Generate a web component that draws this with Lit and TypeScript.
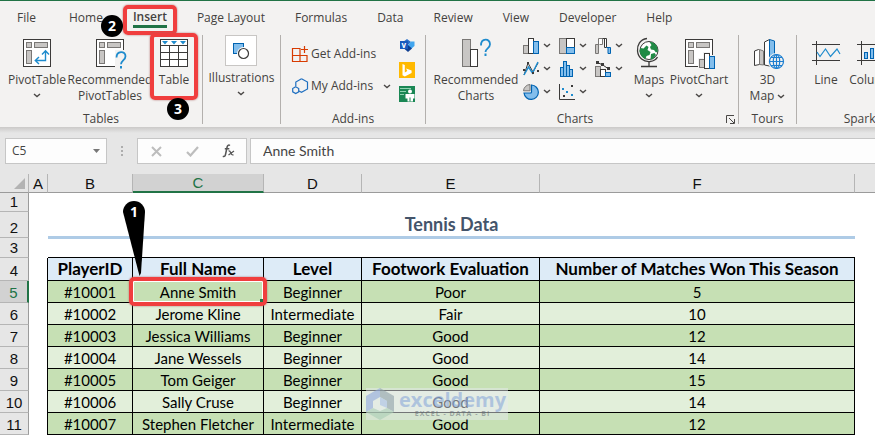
import { LitElement, html, css, svg, nothing } from "lit";
import { customElement, property } from "lit/decorators.js";
import { classMap } from "lit/directives/class-map.js";

const TABS = ["File", "Home", "Insert", "Page Layout", "Formulas", "Data", "Review", "View", "Developer", "Help"];

const PLAYERS: [string, string, string, string, number][] = [
  ["#10001", "Anne Smith", "Beginner", "Poor", 5],
  ["#10002", "Jerome Kline", "Intermediate", "Fair", 10],
  ["#10003", "Jessica Williams", "Beginner", "Good", 12],
  ["#10004", "Jane Wessels", "Beginner", "Good", 14],
  ["#10005", "Tom Geiger", "Beginner", "Good", 15],
  ["#10006", "Sally Cruse", "Beginner", "Good", 14],
  ["#10007", "Stephen Fletcher", "Intermediate", "Good", 12],
];

const pivotFrame = svg`
  <rect x="0.5" y="0.5" width="27" height="27" fill="#fff" stroke="#3b3a39"/>
  <g fill="#c8c6c4" stroke="#797775">
    <rect x="3.5" y="3.5" width="5" height="5"/><rect x="11.5" y="3.5" width="13" height="5"/><rect x="3.5" y="11.5" width="5" height="13"/>
  </g>`;

const LARGE: Record<string, unknown> = {
  pivot: svg`${pivotFrame}
    <g fill="none" stroke="#1e8bcd" stroke-width="1.4"><path d="M22.5 12v9.5H13M19 15.5l3.5-3.7 3.5 3.7M16 18l-3.7 3.5L16 25"/></g>`,
  recommendedPivot: svg`${pivotFrame}
    <path d="M19 11h10v18h-10z" fill="#f3f2f1"/>
    <path d="M20.5 18.5c0-7 9-7 9-1.300 0 4-4.500 4.300-4.500 8" fill="none" stroke="#1e8bcd" stroke-width="1.800"/>
    <rect x="24" y="27" width="2" height="2.500" fill="#1e8bcd"/>`,
  table: svg`<rect x="0.5" y="0.5" width="27" height="27" fill="#fff" stroke="#3b3a39"/>
    <path d="M0 6.500h28M0 13.500h28M0 20.500h28M9.500 6v22M18.500 6v22" stroke="#3b3a39" fill="none"/>
    <path d="M2 2h6l-3 3.500zM11 2h6l-3 3.500zM20 2h6l-3 3.500z" fill="#1e8bcd"/>`,
  recommendedChart: svg`<rect x="0.5" y="0.5" width="8" height="27" fill="#c8c6c4" stroke="#797775"/>
    <rect x="8.500" y="10.500" width="7" height="17" fill="#fff" stroke="#3b3a39"/>
    <path d="M19 6.500c0-7.500 9-7.500 9-1.200 0 4-4.500 4-4.500 7.700" fill="none" stroke="#1e8bcd" stroke-width="1.800"/>
    <rect x="22.500" y="14.500" width="2" height="2.500" fill="#1e8bcd"/>`,
  maps: svg`<circle cx="14" cy="11.500" r="9" fill="#fff" stroke="#3b3a39"/>
    <path d="M14.500 3c3-.5 6 1.500 7.500 4.500l1 5-2 1-2-2.500-3-.5-1-2.500 1.500-2zM5.500 9l3 .5 3-3 2 1.500-1 3 3 2-1 3-3 1-1 3c-3-1-5.500-4.500-6-8zM16 15l3.500-1 1.500 2-3 4-2.500.5z" fill="#1f8a45"/>
    <path d="M12-.5C5 .5 2 6 2.500 12c.7 7 6 11 12.500 10.500 4-.4 6.500-2.500 7.500-4.500" fill="none" stroke="#3b3a39" stroke-width="1.300"/>
    <path d="M14 22.500v4.500M6 27.500h16" stroke="#3b3a39" stroke-width="1.300"/>`,
  pivotChart: svg`${pivotFrame}
    <path d="M13 19h5v-6h7v3h6v14H13z" fill="#f3f2f1"/>
    <rect x="14.500" y="20.500" width="5" height="8" fill="#c8c6c4" stroke="#797775"/>
    <rect x="19.500" y="14.500" width="5" height="15" fill="#fff" stroke="#3b3a39"/>
    <rect x="24.500" y="17.500" width="5" height="12" fill="#83beec" stroke="#0063b1"/>`,
  map3d: svg`<path d="M.5 12l4-1.500 1 .5v14.500l-5 1z" fill="#fff" stroke="#3b3a39"/>
    <path d="M5.500 10.500l4 1.500v14l-4-.5z" fill="#c8c6c4" stroke="#797775"/>
    <path d="M10.500 3l5-2.500V27l-5-1z" fill="#fff" stroke="#3b3a39"/>
    <path d="M15.500 .5l5 1.500v24l-5 1z" fill="#83beec" stroke="#0063b1"/>
    <circle cx="22.500" cy="22.500" r="8.500" fill="#f3f2f1"/>
    <g fill="none" stroke="#1e7fd0" stroke-width="1.200"><circle cx="22.500" cy="22.500" r="7"/><ellipse cx="22.500" cy="22.500" rx="3.200" ry="7"/><path d="M22.500 15.500v14M15.500 22.500h14M17 18.500h11M17 26.500h11"/></g>`,
  line: svg`<path d="M0 5.500h28M0 21.500h28M4.500 2v24" stroke="#3b3a39" fill="none"/>
    <path d="M5 13l3 4.500 5.500-7.500 5 7.500L25 10l3 5" fill="none" stroke="#1e8bcd" stroke-width="1.200"/>`,
  column: svg`<path d="M0 5.500h28M0 21.500h28M4.500 2v24" stroke="#3b3a39" fill="none"/>
    <g fill="#83beec" stroke="#0063b1"><rect x="7.500" y="13.500" width="3" height="6"/><rect x="13.500" y="9.500" width="3" height="10"/><rect x="19.500" y="11.500" width="3" height="8"/></g>`,
};

const SMALL: Record<string, unknown> = {
  getAddins: svg`<path d="M.5 2.500H8v13H.5zM.5 9.500h14.500v6H.5M8 9.500V2.500M12.500 0v7M9 3.500h7" fill="none" stroke="#d83b01" stroke-width="1.200"/>`,
  myAddins: svg`<path d="M9.500.7l6 3.300v7l-6 3.300-2.500-1.300M3.800 8V4L9.500.7" fill="none" stroke="#1e6fc0" stroke-width="1.200"/>
    <path d="M3.700 8.800l3 1.700v3.300l-3 1.700-3-1.700v-3.300z" fill="none" stroke="#1e6fc0" stroke-width="1.200"/>`,
  visio: svg`<path d="M8 1l4 3-4 4-4-4z" fill="#2b6fc9"/><path d="M12 3.500h3.500V8L12 11 8.500 8z" fill="#41a5ee"/><path d="M9 7l4 3.500L9 14l-4-3.500z" fill="#103f91"/>
    <rect x="1" y="3" width="8" height="8" fill="#185abd"/><text x="2.500" y="10" class="mini">v</text>`,
  bing: svg`<rect width="16" height="16" fill="#ffb900"/><path d="M3.500 2l2.300.9v7.600l2.500-1.500-1.200-2.600 5.500 2v2.700l-6.800 3.400-2.300-1.300z" fill="#fff"/>`,
  people: svg`<rect width="16" height="16" fill="#1a8754"/><path d="M1 2.500h11M1 5.500h6M1 8.500h4" stroke="#8fd3b0" fill="none"/><circle cx="11" cy="5.500" r="2" fill="#fff"/><path d="M6.500 8h9v4.500h-1.500V15.500h-5.500v-3h-2z" fill="#fff"/><path d="M11 11.500v4" stroke="#1a8754"/>`,
  bars: svg`<rect x=".5" y="7.500" width="5" height="8" fill="#c8c6c4" stroke="#797775"/><rect x="5.500" y=".5" width="5" height="15" fill="#fff" stroke="#3b3a39"/><rect x="10.500" y="3.500" width="5" height="12" fill="#83beec" stroke="#0063b1"/>`,
  tree: svg`<rect x=".5" y=".5" width="7" height="15" fill="#c8c6c4" stroke="#797775"/><rect x="7.500" y=".5" width="8" height="9" fill="#fff" stroke="#3b3a39"/><rect x="7.500" y="9.500" width="8" height="6" fill="#83beec" stroke="#0063b1"/>`,
  waterfall: svg`<path d="M.5 6.500h3v9h-3z" fill="#c8c6c4" stroke="#797775"/><path d="M3.500 7V.5h4v6h-3" fill="#fff" stroke="#797775"/><path d="M7.500 .5h4v9h-2v-9" fill="#fff" stroke="#3b3a39"/><path d="M11.500 9.500h4v6h-2.500v-6" fill="#83beec" stroke="#0063b1"/>`,
  lines: svg`<path d="M1 14l4-12 5 9 5-9" fill="none" stroke="#3b3a39"/><path d="M1 14L5.500 6l4 6L15 1" fill="none" stroke="#1e8bcd" stroke-width="1.500"/><g fill="#3b3a39"><rect x="0" y="8" width="2" height="2"/><rect x="4" y="1" width="2" height="2"/><rect x="9" y="11" width="2" height="2"/><rect x="14" y="9" width="2" height="2"/></g>`,
  histogram: svg`<g fill="#83beec" stroke="#0063b1"><rect x="1.500" y="6.500" width="3" height="9"/><rect x="4.500" y=".5" width="3" height="15"/><rect x="7.500" y="4.500" width="3" height="11"/><rect x="10.500" y="8.500" width="3" height="7"/></g>`,
  combo: svg`<rect x=".5" y="5.500" width="5" height="10" fill="#c8c6c4" stroke="#797775"/><rect x="5.500" y="8.500" width="5" height="7" fill="#fff" stroke="#3b3a39"/><rect x="10.500" y="11.500" width="5" height="4" fill="#83beec" stroke="#0063b1"/><path d="M2 1.500l5 2 6 4" stroke="#3b3a39" fill="none"/><g fill="#3b3a39"><rect x="1" y="0" width="3" height="3"/><rect x="6" y="2" width="3" height="3"/><rect x="12" y="6" width="3" height="3"/></g>`,
  pie: svg`<path d="M8.500 8V1A7.200 7.200 0 1 1 1 9h7z" fill="#83beec" stroke="#0063b1" stroke-width="1.200"/><path d="M7 6.800V.5A6.800 6.800 0 0 0 .5 6.800z" fill="#c8c6c4" stroke="#797775"/>`,
  scatter: svg`<path d="M.5 0v15.500H16" fill="none" stroke="#3b3a39"/><g fill="#3b3a39"><rect x="12" y="1" width="2" height="2"/><rect x="4" y="11" width="2" height="2"/></g><g fill="#1e8bcd"><rect x="3" y="4" width="2" height="2"/><rect x="7" y="7" width="2" height="2"/><rect x="12" y="10" width="2" height="2"/></g>`,
};

@customElement("ribbon-icon")
class RibbonIcon extends LitElement {
  @property() name = "";
  @property({ type: Boolean }) small = false;
  static styles = css`
    :host { display: block; }
    svg { display: block; overflow: visible; }
    .mini { font: bold 8px "Open Sans", sans-serif; fill: #fff; }
  `;
  render() {
    const s = this.small ? 16 : 28;
    return html`<svg width=${s} height=${s} viewBox="0 0 ${s} ${s}" aria-hidden="true">${(this.small ? SMALL : LARGE)[this.name]}</svg>`;
  }
}

const chevron = html`<svg class="chevron" width="8" height="5" viewBox="0 0 8 5" aria-hidden="true">
  <path d="M1 1l3 2.500L7 1" fill="none" stroke="#4a4846" stroke-width="1.400" /></svg>`;

@customElement("excel-ribbon")
class ExcelRibbon extends LitElement {
  static styles = css`
    :host {
      display: block;
      border-top: 1px solid #217346;
      background: #f3f2f1;
      color: #444240;
      font: 12px/16px "Open Sans", "Noto Sans", sans-serif;
    }
    button {
      font: inherit; color: inherit; background: none; border: 0; padding: 0; margin: 0;
      white-space: nowrap;
    }
    nav { display: flex; gap: 30px; padding: 7px 17px 0; height: 27px; box-sizing: border-box; }
    .tab { height: 20px; line-height: 16px; position: relative; }
    .tab.first { margin-right: 3px; }
    .tab.active { font-weight: 600; border-bottom: 3px solid #217346; }
    .mark { position: absolute; border: 4px solid #f03e3e; border-radius: 5px; box-shadow: 0 0 2px #a66; pointer-events: none; }
    .mark.on-tab { inset: -3px -10px -10px; }
    .mark.on-table { inset: -2px -1px 5px; }
    .step {
      position: absolute; width: 22px; height: 22px; border-radius: 50%;
      background: #000; color: #fff; text-align: center; font-weight: 700; font-size: 14px; line-height: 22px;
    }
    .step.two { left: -32px; top: 7px; z-index: 1; }
    .step.three { left: 16px; top: 63px; }
    .groups { display: flex; padding-top: 7px; height: 92px; overflow: hidden; }
    .group { display: flex; flex-direction: column; flex: none; box-sizing: border-box; }
    .group + .group { border-left: 1px solid transparent; border-image: linear-gradient(#b3b0ad 88px, transparent 88px) 1; }
    .body { display: flex; height: 76px; }
    .caption { position: relative; text-align: center; font-size: 12px; line-height: 16px; }
    .large {
      display: flex; flex-direction: column; align-items: center; position: relative;
      padding-top: 4px; height: 70px; flex: none;
    }
    .large ribbon-icon { margin-bottom: 5px; }
    .chevron { flex: none; }
    .large .chevron { margin-top: 5px; }
    .large .inline { display: flex; align-items: center; gap: 3px; }
    .large .inline .chevron { margin-top: 0; }
    .w36 { width: 36px; } .w44 { width: 44px; } .w46 { width: 46px; } .w56 { width: 56px; } .w64 { width: 64px; } .w82 { width: 82px; } .w92 { width: 92px; }
    .tables { width: 202px; } .tables .body { padding-left: 5px; }
    .illus { width: 78px; } .addins { width: 145px; } .charts { width: 313px; } .tours { width: 58px; } .spark { width: 152px; }
    .charts .body { padding-left: 4px; } .charts .caption { padding-right: 14px; }
    .spark .body { padding-left: 7px; }
    .tours .body { justify-content: center; }
    .illus .body { justify-content: center; }
    .illus .large { padding-top: 0; }
    .box { width: 30px; height: 29px; border: 1px solid #c8c6c4; background: #fff; margin-bottom: 4px; display: grid; place-items: center; }
    .links { display: flex; flex-direction: column; gap: 16px; padding: 11px 0 0 11px; width: 96px; }
    .link { display: flex; align-items: center; gap: 3px; height: 16px; }
    .link .chevron { margin-left: 7px; }
    .apps { display: flex; flex-direction: column; gap: 8px; padding: 3px 0 0 11px; }
    .minis { display: grid; grid-template-columns: repeat(3, 36px); grid-auto-rows: 23px; margin: -1px 0 0 1px; height: 69px; align-items: center; }
    .minis button { display: flex; align-items: center; gap: 4px; }
    .launch { position: absolute; right: 3px; top: 4px; }
    .launch svg { display: block; }
  `;

  private large(icon: string, lines: string[], width: string, tail: "none" | "below" | "inline" = "none", extra: unknown = nothing) {
    return html`<button class="large ${width}">
      <ribbon-icon name=${icon}></ribbon-icon>
      ${lines.map((l, i) => html`<span class="inline">${l}${tail === "inline" && i === lines.length - 1 ? chevron : nothing}</span>`)}
      ${tail === "below" ? chevron : nothing}${extra}
    </button>`;
  }

  private mini(icon: string, label: string) {
    return html`<button aria-label=${label}><ribbon-icon small name=${icon}></ribbon-icon>${chevron}</button>`;
  }

  render() {
    return html`
      <nav>
        ${TABS.map((t, i) => html`<button class=${classMap({ tab: true, first: i === 0, active: t === "Insert" })}>${t}${
          t === "Insert" ? html`<span class="mark on-tab"></span><span class="step two">2</span>` : nothing}</button>`)}
      </nav>
      <div class="groups">
        <section class="group tables">
          <div class="body">
            ${this.large("pivot", ["PivotTable"], "w64", "below")}
            ${this.large("recommendedPivot", ["Recommended", "PivotTables"], "w82")}
            ${this.large("table", ["Table"], "w46", "none", html`<span class="mark on-table"></span><span class="step three">3</span>`)}
          </div>
          <div class="caption">Tables</div>
        </section>
        <section class="group illus">
          <div class="body">
            <button class="large">
              <span class="box"><svg width="18" height="18" viewBox="0 0 18 18" aria-hidden="true">
                <rect x="1.500" y="1.500" width="10" height="10" fill="#83beec" stroke="#0063b1" />
                <circle cx="11.500" cy="11.500" r="6.500" fill="#fff" /><circle cx="11.500" cy="11.500" r="5" fill="#fff" stroke="#3b3a39" stroke-width="1.200" />
              </svg></span>
              <span>Illustrations</span>${chevron}
            </button>
          </div>
        </section>
        <section class="group addins">
          <div class="body">
            <div class="links">
              <button class="link"><ribbon-icon small name="getAddins"></ribbon-icon>Get Add-ins</button>
              <button class="link"><ribbon-icon small name="myAddins"></ribbon-icon>My Add-ins${chevron}</button>
            </div>
            <div class="apps">
              <button aria-label="Visio"><ribbon-icon small name="visio"></ribbon-icon></button>
              <button aria-label="Bing Maps"><ribbon-icon small name="bing"></ribbon-icon></button>
              <button aria-label="People Graph"><ribbon-icon small name="people"></ribbon-icon></button>
            </div>
          </div>
          <div class="caption">Add-ins</div>
        </section>
        <section class="group charts">
          <div class="body">
            ${this.large("recommendedChart", ["Recommended", "Charts"], "w92")}
            <div class="minis">
              ${this.mini("bars", "Column chart")}${this.mini("tree", "Hierarchy chart")}${this.mini("waterfall", "Waterfall chart")}
              ${this.mini("lines", "Line chart")}${this.mini("histogram", "Statistic chart")}${this.mini("combo", "Combo chart")}
              ${this.mini("pie", "Pie chart")}${this.mini("scatter", "Scatter chart")}
            </div>
            ${this.large("maps", ["Maps"], "w36", "below")}
            ${this.large("pivotChart", ["PivotChart"], "w64", "below")}
          </div>
          <div class="caption">Charts
            <button class="launch" aria-label="Chart options"><svg width="9" height="9" viewBox="0 0 9 9">
              <path d="M.5 8V.5H8M3 3l5 5M8.500 4v4.500H4" fill="none" stroke="#4a4846" /></svg></button>
          </div>
        </section>
        <section class="group tours">
          <div class="body">${this.large("map3d", ["3D", "Map"], "w56", "inline")}</div>
          <div class="caption">Tours</div>
        </section>
        <section class="group spark">
          <div class="body">
            ${this.large("line", ["Line"], "w44")}
            ${this.large("column", ["Column"], "w46")}
          </div>
          <div class="caption">Sparklines</div>
        </section>
      </div>`;
  }
}

@customElement("formula-bar")
class FormulaBar extends LitElement {
  static styles = css`
    :host {
      display: flex; align-items: flex-start; padding: 11px 0 10px 5px;
      background: linear-gradient(#cbc9c8, #e6e6e6 6px);
      font: 12px/16px "Open Sans", sans-serif; color: #444;
    }
    .field { display: flex; align-items: center; height: 26px; box-sizing: border-box; border: 1px solid #c6c6c6; background: #fdfdfd; }
    input { border: 0; background: none; outline: 0; padding: 0; min-width: 0; flex: 1; color: #444; font: inherit; }
    button { border: 0; background: none; padding: 0; display: grid; place-items: center; flex: 1; }
    .name { width: 102px; padding: 0 6px; }
    .name button { flex: none; }
    .grip { width: 30px; height: 26px; display: grid; place-items: center; }
    .tools { width: 110px; margin-right: 3px; }
    .formula { flex: 1; border-right: 0; padding-left: 12px; font: 14px/20px Lato, sans-serif; }
  `;
  render() {
    return html`
      <div class="field name">
        <input aria-label="Name box" .value=${"C5"} />
        <button aria-label="Names"><svg width="7" height="4"><path d="M0 0h7L3.500 4z" fill="#777" /></svg></button>
      </div>
      <div class="grip"><svg width="2" height="10"><path d="M0 0h2v2H0zM0 4h2v2H0zM0 8h2v2H0z" fill="#adadad" /></svg></div>
      <div class="field tools">
        <button aria-label="Cancel"><svg width="11" height="11" viewBox="0 0 11 11"><path d="M1 1l9 9M10 1l-9 9" stroke="#bdbdbd" stroke-width="2" /></svg></button>
        <button aria-label="Enter"><svg width="13" height="11" viewBox="0 0 13 11"><path d="M1 6l3.500 3.500L12 1" fill="none" stroke="#bdbdbd" stroke-width="2.200" /></svg></button>
        <button class="fx" aria-label="Insert function"><svg width="13" height="14" viewBox="0 0 13 14">
          <path d="M8 1.500c-1.500-1-2.500 0-2.900 1.500L3.500 10.500C3.200 12 2.500 13 .8 12.300M2.800 4.800h4.500" fill="none" stroke="#555" stroke-width="1.500" />
          <path d="M6.500 7c1.500-.5 2 1 2.500 2.200s1 2.200 2.500 1.500M12 7L6.500 11" fill="none" stroke="#555" stroke-width="1.200" /></svg></button>
      </div>
      <div class="field formula"><input aria-label="Formula" .value=${"Anne Smith"} /></div>`;
  }
}

@customElement("work-sheet")
class WorkSheet extends LitElement {
  static styles = css`
    :host { display: block; position: relative; background: #fff; overflow: hidden; }
    table { border-collapse: separate; border-spacing: 0; table-layout: fixed; width: 100%; }
    .row-head { width: 29px; } .a { width: 19px; } .b { width: 85px; } .c { width: 131px; } .d { width: 98px; } .e { width: 178px; } .f { width: 315px; }
    th, td { padding: 0; box-sizing: border-box; text-align: center; white-space: nowrap; }
    .letters th {
      height: 19px; font: 15px/17px "Liberation Sans", Arial, sans-serif; background: #e6e6e6; color: #111;
      border-bottom: 1px solid #9b9b9b; border-right: 1px solid #b5b5b5; vertical-align: bottom;
    }
    .letters th:last-child { border-right: 0; }
    .letters .sel { background: #d2d2d2; color: #217346; border-bottom: 2px solid #217346; }
    .corner svg { display: block; margin: 0 3px 3px auto; }
    .num {
      font: 15px/18px "Liberation Sans", Arial, sans-serif; background: #e6e6e6; color: #111;
      border-right: 1px solid #9b9b9b; border-bottom: 1px solid #b5b5b5; vertical-align: bottom;
    }
    .num.sel { background: #d2d2d2; color: #217346; border-right: 2px solid #217346; }
    .h19 { height: 19px; } .h26 { height: 26px; } .h20 { height: 20px; } .h23 { height: 23px; } .h22 { height: 22px; }
    .title {
      font: bold 18px/22px Lato, sans-serif; color: #44546a;
      border-bottom: 2px solid #aecbe6; box-shadow: 0 1px #aecbe6;
    }
    .cell, .head { border-right: 1px solid #000; border-bottom: 1px solid #000; position: relative; color: #000; }
    .cell { font: 15px/20px Lato, sans-serif; background: #e2efda; }
    .head { font: bold 17px/20px Lato, sans-serif; background: #ddebf7; }
    .odd .cell { background: #c6e0b4; }
    .edge { border-right: 1px solid #000; }
    .above { border-bottom: 1px solid #000; }
    .selection {
      position: absolute; inset: -4px -4px -4px -4px; border: 4px solid #f03e3e; border-radius: 5px;
      box-shadow: 0 0 2px #a66, inset 0 0 0 1px #fff; z-index: 1;
    }
    .handle { position: absolute; right: 0; bottom: 0; width: 3px; height: 3px; background: #217346; z-index: 2; }
    .pin { position: absolute; left: 123px; top: 27px; z-index: 2; }
    .pin text { font: bold 14px "Open Sans", sans-serif; fill: #fff; }
    .brand {
      position: absolute; left: 366px; top: 214px; width: 142px; height: 32px; box-sizing: border-box;
      display: flex; align-items: center; gap: 5px; background: rgb(230 234 238 / 50%); z-index: 2;
    }
    .brand svg { flex: none; }
    .brand div { display: flex; flex-direction: column; align-items: center; }
    .word { font: 700 20px/20px "Open Sans", sans-serif; color: rgb(120 155 215 / 50%); }
    .sub { font: bold 7px/8px "Open Sans", sans-serif; color: rgb(90 100 110 / 50%); letter-spacing: 1px; }
  `;

  render() {
    return html`
      <table>
        <colgroup>
          <col class="row-head" /><col class="a" /><col class="b" /><col class="c" /><col class="d" /><col class="e" /><col class="f" /><col />
        </colgroup>
        <thead>
          <tr class="letters">
            <th class="corner"><svg width="11" height="11"><path d="M11 0v11H0z" fill="#b3b3b3" /></svg></th>
            ${["A", "B", "C", "D", "E", "F"].map((l) => html`<th class=${classMap({ sel: l === "C" })}>${l}</th>`)}
            <th></th>
          </tr>
        </thead>
        <tbody>
          <tr><th class="num h19">1</th><td colspan="7"></td></tr>
          <tr><th class="num h26">2</th><td></td><td class="title" colspan="5">Tennis Data</td><td></td></tr>
          <tr><th class="num h20">3</th><td></td><td class="above" colspan="5"></td><td></td></tr>
          <tr>
            <th class="num h23">4</th><td class="edge"></td>
            ${["PlayerID", "Full Name", "Level", "Footwork Evaluation", "Number of Matches Won This Season"].map((h) => html`<th class="head">${h}</th>`)}
            <td></td>
          </tr>
          ${PLAYERS.map((p, i) => html`<tr class=${classMap({ odd: i % 2 === 0 })}>
            <th class=${classMap({ num: true, h22: true, sel: i === 0 })}>${i + 5}</th><td class="edge"></td>
            ${p.map((v, j) => html`<td class="cell">${v}${i === 0 && j === 1
              ? html`<span class="selection"></span><span class="handle"></span>` : nothing}</td>`)}
            <td></td>
          </tr>`)}
        </tbody>
      </table>
      <svg class="pin" width="22" height="76" viewBox="0 0 22 76">
        <path d="M0 11a11 11 0 0 1 22 0L18 72l-1.500 3z" fill="#000" /><text x="7" y="16">1</text>
      </svg>
      <div class="brand">
        <svg width="28" height="32" viewBox="0 0 28 32" aria-hidden="true">
          <path d="M14 0L0 8v16l7-4v-7l7-4z" fill="#8fa9dc" opacity=".6" /><path d="M14 0l14 8v16l-7-4v-7l-7-4z" fill="#8ea0a8" opacity=".6" />
          <path d="M0 24l14 8 14-8-7-4-7 3-7-3z" fill="#a9cdb4" opacity=".6" /><path d="M14 9l7 4v7l-7-3z" fill="#a8bfe6" opacity=".6" />
        </svg>
        <div><span class="word">exceldemy</span><span class="sub">EXCEL - DATA - BI</span></div>
      </div>`;
  }
}

@customElement("app-root")
class AppRoot extends LitElement {
  static styles = css`:host { display: block; overflow: hidden; background: #fff; }`;
  render() {
    return html`<excel-ribbon></excel-ribbon><formula-bar></formula-bar><work-sheet></work-sheet>`;
  }
}
